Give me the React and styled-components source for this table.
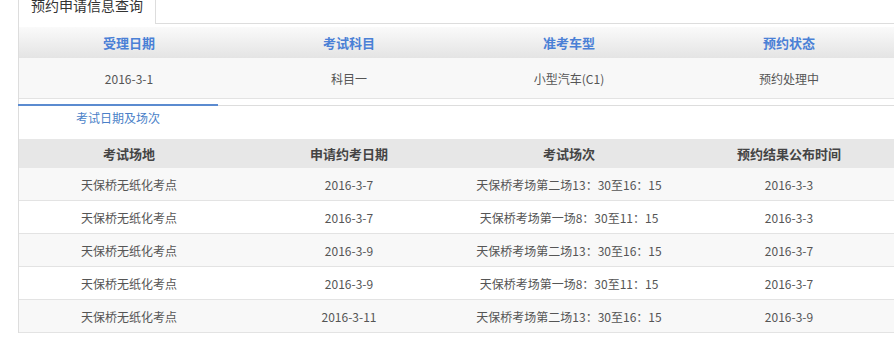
import styled, { createGlobalStyle } from "styled-components";

const GlobalStyle = createGlobalStyle`
  *, *::before, *::after {
    box-sizing: border-box;
  }
  html, body {
    margin: 0;
    padding: 0;
    background: #fff;
    overflow: hidden;
  }
  body {
    font-family: "Noto Sans CJK SC", "Noto Sans", sans-serif;
    font-size: 12px;
    color: #555;
  }
`;

const Page = styled.div`
  margin-left: 18px;
  width: 880px;
`;

const TabBar = styled.div`
  display: flex;
  height: 36px;
  margin-top: -12px;
`;

const Tab = styled.div`
  width: 138px;
  border: 1px solid #ddd;
  border-bottom: none;
  background: #fff;
  font-size: 14px;
  line-height: 33px;
  text-align: center;
  color: #333;
`;

const TabFill = styled.div`
  flex: 1;
  border-bottom: 1px solid #ddd;
`;

const Body = styled.div`
  border-left: 1px solid #ddd;
  padding-top: 3px;
`;

const Row = styled.div`
  display: grid;
  grid-template-columns: repeat(4, 220px);
  align-items: center;
  text-align: center;
  height: ${(p) => p.$h}px;
  background: ${(p) => p.$bg || "#fff"};
  border-bottom: ${(p) => (p.$line ? "1px solid #e3e3e3" : "none")};
`;

const InfoHead = styled(Row)`
  background: linear-gradient(#fafafa, #e4e4e4);
  color: #4a80d6;
  font-weight: bold;
  font-size: 13px;
`;

const PlanHead = styled(Row)`
  background: #e7e7e7;
  color: #444;
  font-weight: bold;
  font-size: 13px;
`;

const SubTabs = styled.div`
  display: flex;
  align-items: flex-start;
  margin-top: 5px;
  height: 35px;
`;

const SubTab = styled.div`
  width: 200px;
  margin-left: -1px;
  border-top: 2px solid #5b8bd0;
  padding-top: 2px;
  line-height: 20px;
  text-align: center;
  color: #4a7fc8;
`;

const SubFill = styled.div`
  flex: 1;
  margin-top: 1px;
  border-top: 1px solid #ddd;
`;

const info = ["2016-3-1", "科目一", "小型汽车(C1)", "预约处理中"];

const plans = [
  ["天保桥无纸化考点", "2016-3-7", "天保桥考场第二场13：30至16：15", "2016-3-3"],
  ["天保桥无纸化考点", "2016-3-7", "天保桥考场第一场8：30至11：15", "2016-3-3"],
  ["天保桥无纸化考点", "2016-3-9", "天保桥考场第二场13：30至16：15", "2016-3-7"],
  ["天保桥无纸化考点", "2016-3-9", "天保桥考场第一场8：30至11：15", "2016-3-7"],
  ["天保桥无纸化考点", "2016-3-11", "天保桥考场第二场13：30至16：15", "2016-3-9"],
];

export default function App() {
  return (
    <>
      <GlobalStyle />
      <Page>
        <TabBar>
          <Tab>预约申请信息查询</Tab>
          <TabFill />
        </TabBar>
        <Body>
          <InfoHead $h={31}>
            <span>受理日期</span>
            <span>考试科目</span>
            <span>准考车型</span>
            <span>预约状态</span>
          </InfoHead>
          <Row $h={41} $bg="#f8f8f8" $line>
            {info.map((t) => (
              <span key={t}>{t}</span>
            ))}
          </Row>
          <SubTabs>
            <SubTab>考试日期及场次</SubTab>
            <SubFill />
          </SubTabs>
          <PlanHead $h={29}>
            <span>考试场地</span>
            <span>申请约考日期</span>
            <span>考试场次</span>
            <span>预约结果公布时间</span>
          </PlanHead>
          {plans.map((r, i) => (
            <Row key={i} $h={33} $bg={i % 2 === 0 ? "#f8f8f8" : "#fff"} $line>
              {r.map((c, j) => (
                <span key={j}>{c}</span>
              ))}
            </Row>
          ))}
        </Body>
      </Page>
    </>
  );
}
